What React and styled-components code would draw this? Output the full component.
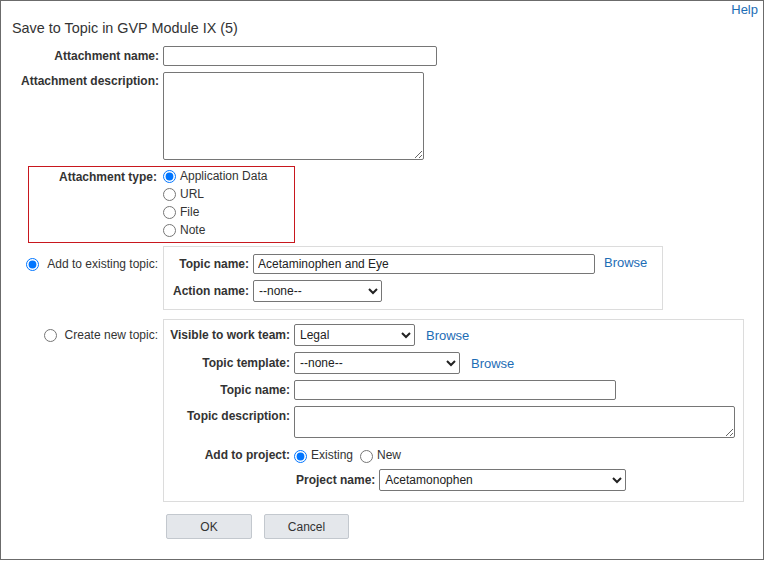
import React from "react";
import styled, { createGlobalStyle } from "styled-components";

const Global = createGlobalStyle`
  html, body { margin: 0; padding: 0; background: #fff; }
  body {
    font-family: "Liberation Sans", Arial, sans-serif;
    font-size: 12px;
    color: #333;
  }
  * { box-sizing: border-box; }
`;

const Page = styled.div`
  width: 764px;
  height: 560px;
  border: 1px solid #6b6b6b;
  padding: 0 5px 0 11px;
  display: flex;
  flex-direction: column;
`;

const TopBar = styled.div`
  display: flex;
  justify-content: flex-end;
  margin-top: 1px;
  height: 15px;
`;

const Link = styled.a`
  font-size: 13px;
  line-height: 15px;
  color: #1d6db5;
  text-decoration: none;
  white-space: nowrap;
  margin-left: ${(p) => p.$ml ?? 0}px;
  margin-top: ${(p) => p.$mt ?? 0}px;
`;

const Title = styled.h1`
  margin: 3px 0 0;
  font-size: 14.4px;
  line-height: 17px;
  font-weight: normal;
  color: #333;
`;

const Row = styled.div`
  display: flex;
  align-items: ${(p) => (p.$top ? "flex-start" : "center")};
  gap: 4px;
  margin-top: ${(p) => p.$mt ?? 0}px;
  padding-left: ${(p) => p.$indent ?? 0}px;
  min-height: ${(p) => p.$h ?? 0}px;
`;

const Label = styled.label`
  flex-shrink: 0;
  width: ${(p) => (p.$w ? `${p.$w}px` : "auto")};
  text-align: right;
  font-weight: bold;
  line-height: 14px;
  padding-top: ${(p) => p.$pt ?? 0}px;
  white-space: nowrap;
`;

const TextInput = styled.input`
  width: ${(p) => p.$w}px;
  height: 20px;
  border: 1px solid #767676;
  border-radius: 2px;
  padding: 0 4px;
  font: 12px "Liberation Sans", Arial, sans-serif;
  color: #222;
  margin: 0;
`;

const TextArea = styled.textarea`
  width: ${(p) => p.$w}px;
  height: ${(p) => p.$h}px;
  border: 1px solid #767676;
  border-radius: 2px;
  padding: 2px 4px;
  font: 12px "Liberation Sans", Arial, sans-serif;
  margin: 0;
  resize: both;
  display: block;
`;

const Select = styled.select`
  width: ${(p) => p.$w}px;
  height: 22px;
  border: 1px solid #767676;
  border-radius: 2px;
  padding: 0 0 0 1px;
  font: 12px "Liberation Sans", Arial, sans-serif;
  color: #222;
  background: #fff;
  margin: 0;
`;

const Radio = styled.input.attrs({ type: "radio" })`
  width: 13px;
  height: 13px;
  margin: ${(p) => p.$mt ?? 0}px 0 0 0;
  flex-shrink: 0;
`;

const TypeBox = styled.div`
  display: flex;
  align-items: flex-start;
  gap: 6px;
  width: 267px;
  margin: 6px 0 0 16px;
  border: 1px solid #c8171e;
  padding: 0 0 3px 0;
`;

const RadioList = styled.div`
  display: flex;
  flex-direction: column;
`;

const RadioOption = styled.label`
  display: flex;
  align-items: center;
  gap: 4px;
  height: 18px;
  line-height: 14px;
  white-space: nowrap;
  margin-left: ${(p) => p.$ml ?? 0}px;
`;

const Section = styled.div`
  display: flex;
  align-items: flex-start;
  gap: 4px;
  margin-top: ${(p) => p.$mt}px;
`;

const SectionLead = styled.label`
  width: 147px;
  flex-shrink: 0;
  display: flex;
  justify-content: flex-end;
  align-items: center;
  gap: 8px;
  height: ${(p) => p.$h}px;
  margin-top: ${(p) => p.$mt}px;
  padding-right: 1px;
  line-height: 14px;
  white-space: nowrap;
`;

const Panel = styled.div`
  width: ${(p) => p.$w}px;
  border: 1px solid #dcdcdc;
  padding: ${(p) => p.$pad};
  display: flex;
  flex-direction: column;
`;

const Buttons = styled.div`
  display: flex;
  gap: 12px;
  margin: 12px 0 0 154px;
`;

const Button = styled.button`
  width: ${(p) => p.$w}px;
  height: 25px;
  background: #e4e7eb;
  border: 1px solid #c3c8ce;
  border-radius: 2px;
  font: 12px "Liberation Sans", Arial, sans-serif;
  color: #333;
  padding: 0;
  margin: 0;
`;

export default function App() {
  return (
    <>
      <Global />
      <Page>
        <TopBar>
          <Link href="#">Help</Link>
        </TopBar>
        <Title>Save to Topic in GVP Module IX (5)</Title>

        <Row $mt={9}>
          <Label $w={147}>Attachment name:</Label>
          <TextInput $w={274} />
        </Row>

        <Row $mt={6} $top>
          <Label $w={147} $pt={2}>Attachment description:</Label>
          <TextArea $w={261} $h={88} />
        </Row>

        <TypeBox>
          <Label $w={128} $pt={3}>Attachment type:</Label>
          <RadioList>
            <RadioOption>
              <Radio name="atype" defaultChecked />
              Application Data
            </RadioOption>
            <RadioOption>
              <Radio name="atype" />
              URL
            </RadioOption>
            <RadioOption>
              <Radio name="atype" />
              File
            </RadioOption>
            <RadioOption>
              <Radio name="atype" />
              Note
            </RadioOption>
          </RadioList>
        </TypeBox>

        <Section $mt={3}>
          <SectionLead $h={20} $mt={8}>
            <Radio name="mode" defaultChecked />
            Add to existing topic:
          </SectionLead>
          <Panel $w={500} $pad="7px 0 7px 8px">
            <Row>
              <Label $w={77}>Topic name:</Label>
              <TextInput $w={342} defaultValue="Acetaminophen and Eye" />
              <Link href="#" $ml={5} $mt={-3}>Browse</Link>
            </Row>
            <Row $mt={6}>
              <Label $w={77}>Action name:</Label>
              <Select $w={129} defaultValue="none">
                <option value="none">--none--</option>
              </Select>
            </Row>
          </Panel>
        </Section>

        <Section $mt={9}>
          <SectionLead $h={22} $mt={5}>
            <Radio name="mode" />
            Create new topic:
          </SectionLead>
          <Panel $w={581} $pad="4px 0 10px 6px">
            <Row>
              <Label $w={120}>Visible to work team:</Label>
              <Select $w={121} defaultValue="legal">
                <option value="legal">Legal</option>
              </Select>
              <Link href="#" $ml={7}>Browse</Link>
            </Row>
            <Row $mt={6}>
              <Label $w={120}>Topic template:</Label>
              <Select $w={166} defaultValue="none">
                <option value="none">--none--</option>
              </Select>
              <Link href="#" $ml={7}>Browse</Link>
            </Row>
            <Row $mt={6}>
              <Label $w={120}>Topic name:</Label>
              <TextInput $w={322} />
            </Row>
            <Row $mt={6} $top>
              <Label $w={120} $pt={3}>Topic description:</Label>
              <TextArea $w={441} $h={32} />
            </Row>
            <Row $mt={6} $h={22}>
              <Label $w={120}>Add to project:</Label>
              <RadioOption>
                <Radio name="proj" $mt={3} defaultChecked />
                Existing
              </RadioOption>
              <RadioOption $ml={3}>
                <Radio name="proj" $mt={3} />
                New
              </RadioOption>
            </Row>
            <Row $mt={3} $indent={126}>
              <Label>Project name:</Label>
              <Select $w={247} defaultValue="aceta">
                <option value="aceta">Acetamonophen</option>
              </Select>
            </Row>
          </Panel>
        </Section>

        <Buttons>
          <Button $w={86}>OK</Button>
          <Button $w={85}>Cancel</Button>
        </Buttons>
      </Page>
    </>
  );
}
